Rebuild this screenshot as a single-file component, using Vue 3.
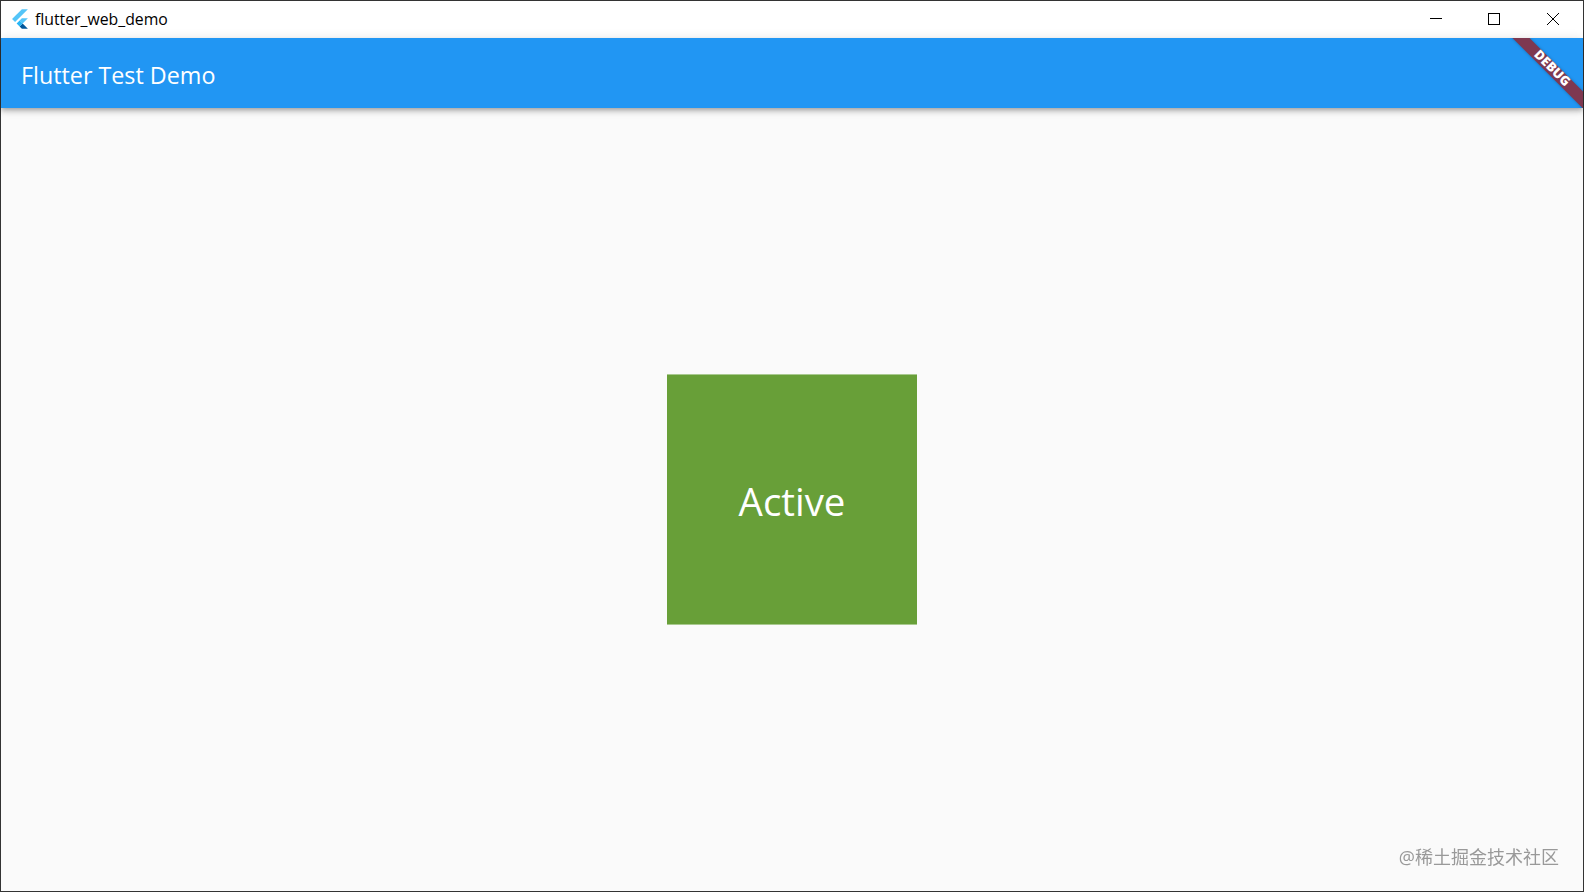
<template>
  <div class="window">
    <!-- 标题栏 -->
    <div class="title-bar">
      <svg class="app-icon" viewBox="0 0 166 202" width="18" height="22">
        <path d="M37.7 128.9 9.8 101 100.4 10.4h55.5z" fill="#54c5f8" />
        <path d="M155.9 93.7h-55.5L79.6 114.5l27.9 27.9z" fill="#54c5f8" />
        <path d="M79.6 170.6l20.8 20.8h55.5l-48.4-48.9z" fill="#01579b" />
        <path d="M79.6 114.5 51.8 142.4l27.8 28.2 27.9-28.2z" fill="#29b6f6" />
      </svg>
      <span class="title-text">{{ title }}</span>
      <div class="window-controls">
        <button class="control">
          <svg width="12" height="12" viewBox="0 0 12 12"><path d="M0 5.5h12" stroke="#000" fill="none" /></svg>
        </button>
        <button class="control">
          <svg width="12" height="12" viewBox="0 0 12 12"><rect x="0.5" y="0.5" width="11" height="11" stroke="#000" fill="none" /></svg>
        </button>
        <button class="control">
          <svg width="12" height="12" viewBox="0 0 12 12"><path d="M0 0l12 12M12 0L0 12" stroke="#000" fill="none" /></svg>
        </button>
      </div>
    </div>

    <!-- 应用栏 -->
    <header class="app-bar">
      <h1 class="app-title">Flutter Test Demo</h1>
      <div class="banner-clip">
        <div class="debug-banner"><span>DEBUG</span></div>
      </div>
    </header>

    <!-- 内容 -->
    <main class="content">
      <div class="active-box"><span class="active-label">Active</span></div>
      <span class="watermark">@稀土掘金技术社区</span>
    </main>
  </div>
</template>

<script setup>
const title = 'flutter_web_demo'
</script>

<style>
html, body {
  margin: 0;
  height: 100%;
}
</style>

<style scoped>
.window {
  box-sizing: border-box;
  width: 1584px;
  height: 892px;
  display: flex;
  flex-direction: column;
  border: 1px solid #333;
  font-family: "Open Sans", "Noto Sans", "Noto Sans CJK SC", sans-serif;
}

.title-bar {
  height: 37px;
  flex-shrink: 0;
  display: flex;
  align-items: center;
  background-color: #fff;
  padding-left: 10px;
  padding-bottom: 2px;
  box-sizing: border-box;
}

.app-icon {
  margin-right: 6px;
}

.title-text {
  font-size: 15.8px;
  color: #000;
}

.window-controls {
  margin-left: auto;
  display: flex;
  margin-right: 1px;
}

.control {
  width: 58.5px;
  height: 35px;
  padding: 0;
  border: none;
  background: none;
  display: flex;
  align-items: center;
  justify-content: center;
}

.app-bar {
  position: relative;
  height: 70px;
  flex-shrink: 0;
  display: flex;
  align-items: center;
  padding-left: 20px;
  padding-top: 3px;
  box-sizing: border-box;
  background-color: #2196f3;
  box-shadow: 0 2px 4px -1px rgba(0, 0, 0, 0.2), 0 4px 5px 0 rgba(0, 0, 0, 0.14), 0 1px 10px 0 rgba(0, 0, 0, 0.12);
  z-index: 1;
}

.app-title {
  margin: 0;
  font-size: 23.3px;
  font-weight: 400;
  color: #fff;
}

.banner-clip {
  position: absolute;
  inset: 0;
  overflow: hidden;
}

.debug-banner {
  position: absolute;
  top: 24px;
  right: -28px;
  width: 120px;
  height: 12px;
  display: flex;
  align-items: center;
  justify-content: center;
  background-color: #7e3850;
  box-shadow: 0 0 3px rgba(0, 0, 0, 0.3);
  transform: rotate(45deg);
}

.debug-banner span {
  font-size: 13px;
  font-weight: 800;
  color: #fff;
  transform: translate(1px, -1.5px);
}

.content {
  position: relative;
  flex: 1;
  display: flex;
  align-items: center;
  justify-content: center;
  background-color: #fafafa;
}

.active-box {
  width: 250px;
  height: 247px;
  display: flex;
  align-items: center;
  justify-content: center;
  padding-top: 2px;
  border-top: 1px solid #a9c98f;
  border-bottom: 1px solid #a9c98f;
  background-color: #689f38;
  color: #fff;
}

.active-label {
  font-size: 38.4px;
}

.watermark {
  position: absolute;
  right: 24px;
  bottom: 22px;
  font-size: 18px;
  color: #999;
  filter: blur(0.4px);
  white-space: nowrap;
}
</style>
